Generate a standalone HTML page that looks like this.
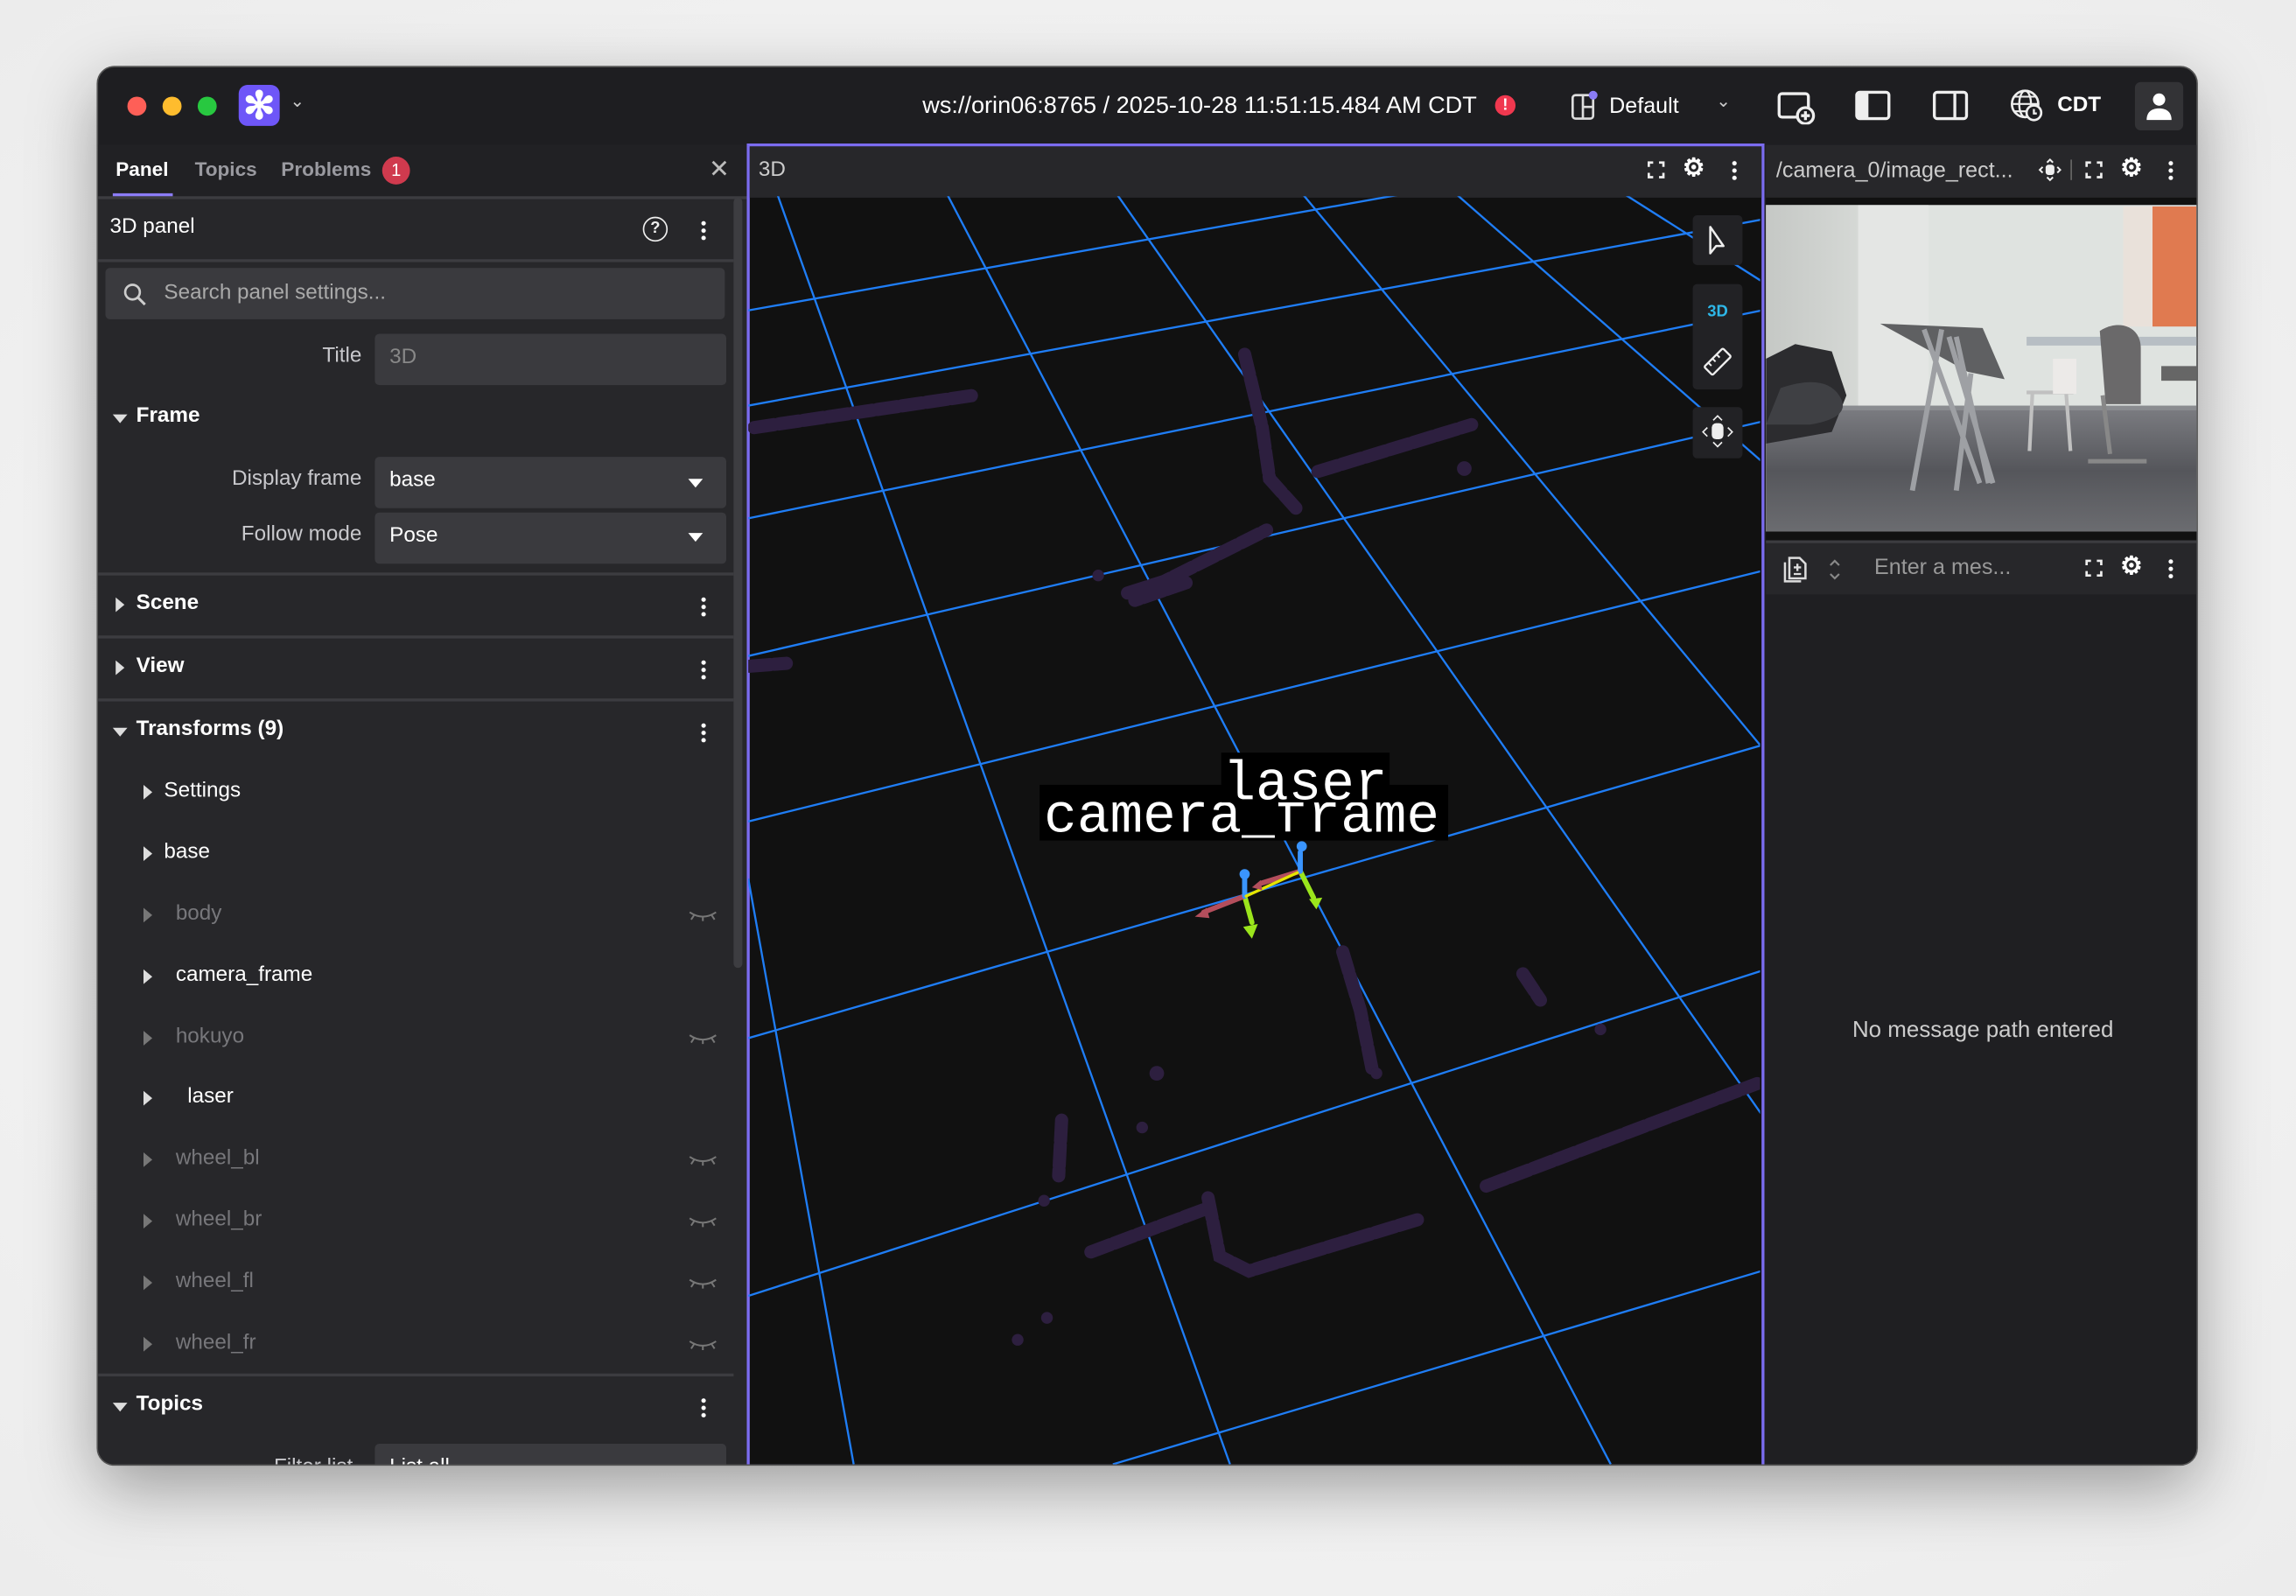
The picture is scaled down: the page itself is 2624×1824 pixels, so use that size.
<!DOCTYPE html>
<html><head><meta charset="utf-8"><style>
*{box-sizing:border-box;margin:0;padding:0}
html,body{width:2624px;height:1824px;overflow:hidden;background:#f3f3f3}
#w{position:absolute;left:0;top:0;width:1568px;height:1090px;transform:scale(1.67347);transform-origin:0 0;font-family:"Liberation Sans",sans-serif;background:radial-gradient(ellipse at 50% 50%,#fafafa,#ececec)}
.a{position:absolute}
.win{left:66px;top:45px;width:1435px;height:956px;border-radius:12px;background:#1e1e21;overflow:hidden;box-shadow:0 15px 45px rgba(0,0,0,.35);border:1px solid #555}
.t{color:#fff;font-size:14.5px;white-space:nowrap}
.g{color:#8a8a8e}
.lbl{color:#c8c8cc;font-size:14.5px;text-align:right;width:150px}
.inp{background:#3a3a3e;border-radius:3px}
.hr{height:2px;background:#3c3c40}
.tri-d{width:0;height:0;border-left:5px solid transparent;border-right:5px solid transparent;border-top:6px solid #ddd}
.tri-r{width:0;height:0;border-top:5px solid transparent;border-bottom:5px solid transparent;border-left:6px solid #ddd}
.keb{width:3px;height:14px;background:radial-gradient(circle,#fff 1.4px,transparent 1.6px) 0 0/3px 5px repeat-y}
</style></head><body><div id="w">
<div class="a win">
 <div class="a" style="left:20px;top:20px;width:13px;height:13px;border-radius:50%;background:#fe5f57"></div>
 <div class="a" style="left:44px;top:20px;width:13px;height:13px;border-radius:50%;background:#febc2e"></div>
 <div class="a" style="left:68px;top:20px;width:13px;height:13px;border-radius:50%;background:#28c840"></div>
 <div class="a" style="left:96px;top:12px;width:28px;height:28px;border-radius:6px;background:#6e56f8;color:#fff;font-size:26px;line-height:28px;text-align:center;font-weight:bold">✻</div>
 <div class="a t" style="left:131px;top:16px;font-size:12px;color:#ccc">⌄</div>
 <div class="a t" style="left:563px;top:17px;font-size:16.2px">ws://orin06:8765 / 2025-10-28 11:51:15.484 AM CDT</div>
 <div class="a" style="left:954px;top:19px;width:14px;height:14px;border-radius:50%;background:#f0384f;color:#fff;font-size:11px;font-weight:bold;text-align:center;line-height:14px">!</div>
 <svg class="a" style="left:1005px;top:15px" width="20" height="22" viewBox="0 0 20 22"><rect x="2" y="4" width="14" height="16" rx="2" fill="none" stroke="#ddd" stroke-width="1.6"/><path d="M9 4v16M9 12h7" stroke="#ddd" stroke-width="1.6"/><circle cx="16" cy="4" r="3" fill="#8b7cf7"/></svg>
 <div class="a t" style="left:1032px;top:18px;font-size:15px">Default</div>
 <div class="a t" style="left:1105px;top:16px;font-size:12px;color:#ccc">⌄</div>
 <svg class="a" style="left:1146px;top:15px" width="28" height="24" viewBox="0 0 28 24"><rect x="2" y="3" width="20" height="16" rx="2" fill="none" stroke="#eee" stroke-width="2"/><circle cx="20" cy="18" r="5.5" fill="#1e1e21" stroke="#eee" stroke-width="2"/><path d="M20 15v6M17 18h6" stroke="#eee" stroke-width="2"/></svg>
 <svg class="a" style="left:1199px;top:15px" width="26" height="22" viewBox="0 0 26 22"><rect x="2" y="2" width="22" height="18" rx="2" fill="none" stroke="#eee" stroke-width="2"/><rect x="2" y="2" width="8" height="18" fill="#eee"/></svg>
 <svg class="a" style="left:1252px;top:15px" width="26" height="22" viewBox="0 0 26 22"><rect x="2" y="2" width="22" height="18" rx="2" fill="none" stroke="#eee" stroke-width="2"/><path d="M16 2v18" stroke="#eee" stroke-width="2"/></svg>
 <svg class="a" style="left:1305px;top:14px" width="24" height="24" viewBox="0 0 24 24"><circle cx="11" cy="11" r="9" fill="none" stroke="#eee" stroke-width="1.6"/><ellipse cx="11" cy="11" rx="4" ry="9" fill="none" stroke="#eee" stroke-width="1.4"/><path d="M2 11h18M4 6h14M4 16h14" stroke="#eee" stroke-width="1.2"/><circle cx="17" cy="17" r="5" fill="#1e1e21" stroke="#eee" stroke-width="1.6"/><path d="M17 14.5v3h2" stroke="#eee" stroke-width="1.4" fill="none"/></svg>
 <div class="a t" style="left:1338px;top:18px;font-weight:bold">CDT</div>
 <div class="a" style="left:1391px;top:10px;width:33px;height:33px;border-radius:4px;background:#333336"></div>
 <svg class="a" style="left:1398px;top:17px" width="19" height="19" viewBox="0 0 19 19"><circle cx="9.5" cy="5" r="4.2" fill="#fff"/><path d="M1 19c0-6 4-8 8.5-8s8.5 2 8.5 8z" fill="#fff"/></svg>

 <div class="a" style="left:0;top:53px;width:443px;height:903px;background:#27272a"></div>
 <div class="a" style="left:0;top:53px;width:443px;height:36px;background:#212124"></div>
 <div class="a t" style="left:12px;top:62px;font-size:13.5px;font-weight:bold">Panel</div>
 <div class="a" style="left:10px;top:86px;width:41px;height:3px;background:#8b7cf7"></div>
 <div class="a t g" style="left:66px;top:62px;font-size:13.5px;font-weight:bold;color:#9a9aa0">Topics</div>
 <div class="a t g" style="left:125px;top:62px;font-size:13.5px;font-weight:bold;color:#9a9aa0">Problems</div>
 <div class="a" style="left:194px;top:61px;width:19px;height:19px;border-radius:50%;background:#d03a4e;color:#fff;font-size:12px;text-align:center;line-height:19px">1</div>
 <div class="a t" style="left:417px;top:60px;font-size:17px;color:#bbb">✕</div>
 <div class="a hr" style="left:0;top:88px;width:443px"></div>
 <div class="a t" style="left:8px;top:101px">3D panel</div>
 <div class="a" style="left:372px;top:102px;width:17px;height:17px;border:1.6px solid #eee;border-radius:50%;color:#eee;font-size:11px;font-weight:bold;text-align:center;line-height:14px">?</div>
 <div class="a keb" style="left:412px;top:104px"></div>
 <div class="a hr" style="left:0;top:131px;width:434px"></div>
 <div class="a inp" style="left:5px;top:137px;width:423px;height:35px"></div>
 <svg class="a" style="left:17px;top:147px" width="16" height="16" viewBox="0 0 16 16"><circle cx="6.5" cy="6.5" r="5" fill="none" stroke="#ccc" stroke-width="1.6"/><path d="M10 10l5 5" stroke="#ccc" stroke-width="1.8"/></svg>
 <div class="a t" style="left:45px;top:146px;color:#aaa">Search panel settings...</div>
 <div class="a lbl" style="left:30px;top:189px">Title</div>
 <div class="a inp" style="left:189px;top:182px;width:240px;height:35px"></div>
 <div class="a t" style="left:199px;top:190px;color:#888">3D</div>
 <div class="a tri-d" style="left:10px;top:237px"></div>
 <div class="a t" style="left:26px;top:230px;font-weight:bold">Frame</div>
 <div class="a lbl" style="left:30px;top:273px">Display frame</div>
 <div class="a inp" style="left:189px;top:266px;width:240px;height:35px"></div>
 <div class="a t" style="left:199px;top:274px">base</div>
 <div class="a tri-d" style="left:403px;top:281px;border-top-color:#fff"></div>
 <div class="a lbl" style="left:30px;top:311px">Follow mode</div>
 <div class="a inp" style="left:189px;top:304px;width:240px;height:35px"></div>
 <div class="a t" style="left:199px;top:312px">Pose</div>
 <div class="a tri-d" style="left:403px;top:318px;border-top-color:#fff"></div>
 <div class="a hr" style="left:0;top:345px;width:434px"></div>
 <div class="a tri-r" style="left:12px;top:362px"></div>
 <div class="a t" style="left:26px;top:358px;font-weight:bold">Scene</div>
 <div class="a keb" style="left:412px;top:361px"></div>
 <div class="a hr" style="left:0;top:388px;width:434px"></div>
 <div class="a tri-r" style="left:12px;top:405px"></div>
 <div class="a t" style="left:26px;top:401px;font-weight:bold">View</div>
 <div class="a keb" style="left:412px;top:404px"></div>
 <div class="a hr" style="left:0;top:431px;width:434px"></div>
 <div class="a tri-d" style="left:10px;top:451px"></div>
 <div class="a t" style="left:26px;top:444px;font-weight:bold">Transforms (9)</div>
 <div class="a keb" style="left:412px;top:447px"></div>
 <div class="a tri-r" style="left:31px;top:490px"></div><div class="a t" style="left:45px;top:486px">Settings</div>
 <div class="a tri-r" style="left:31px;top:532px"></div><div class="a t" style="left:45px;top:528px">base</div>
 <div class="a tri-r" style="left:31px;top:574px;border-left-color:#777"></div><div class="a t" style="left:53px;top:570px;color:#77777b">body</div>
 <div class="a tri-r" style="left:31px;top:616px"></div><div class="a t" style="left:53px;top:612px">camera_frame</div>
 <div class="a tri-r" style="left:31px;top:658px;border-left-color:#777"></div><div class="a t" style="left:53px;top:654px;color:#77777b">hokuyo</div>
 <div class="a tri-r" style="left:31px;top:699px"></div><div class="a t" style="left:61px;top:695px">laser</div>
 <div class="a tri-r" style="left:31px;top:741px;border-left-color:#777"></div><div class="a t" style="left:53px;top:737px;color:#77777b">wheel_bl</div>
 <div class="a tri-r" style="left:31px;top:783px;border-left-color:#777"></div><div class="a t" style="left:53px;top:779px;color:#77777b">wheel_br</div>
 <div class="a tri-r" style="left:31px;top:825px;border-left-color:#777"></div><div class="a t" style="left:53px;top:821px;color:#77777b">wheel_fl</div>
 <div class="a tri-r" style="left:31px;top:867px;border-left-color:#777"></div><div class="a t" style="left:53px;top:863px;color:#77777b">wheel_fr</div>
 <svg class="a" style="left:403px;top:574px" width="20" height="360" viewBox="0 0 20 360">
  <g fill="none" stroke="#777" stroke-width="1.2">
   <path d="M1 3q9 6 18 0M4 5l-2 3M10 6v3M16 5l2 3"/>
   <path transform="translate(0,84)" d="M1 3q9 6 18 0M4 5l-2 3M10 6v3M16 5l2 3"/>
   <path transform="translate(0,167)" d="M1 3q9 6 18 0M4 5l-2 3M10 6v3M16 5l2 3"/>
   <path transform="translate(0,209)" d="M1 3q9 6 18 0M4 5l-2 3M10 6v3M16 5l2 3"/>
   <path transform="translate(0,251)" d="M1 3q9 6 18 0M4 5l-2 3M10 6v3M16 5l2 3"/>
   <path transform="translate(0,293)" d="M1 3q9 6 18 0M4 5l-2 3M10 6v3M16 5l2 3"/>
  </g></svg>
 <div class="a hr" style="left:0;top:892px;width:434px"></div>
 <div class="a tri-d" style="left:10px;top:912px"></div>
 <div class="a t" style="left:26px;top:905px;font-weight:bold">Topics</div>
 <div class="a keb" style="left:412px;top:908px"></div>
 <div class="a inp" style="left:189px;top:940px;width:240px;height:35px"></div>
 <div class="a t" style="left:120px;top:948px;color:#c8c8cc">Filter list</div>
 <div class="a t" style="left:199px;top:948px">List all</div>
 <div class="a" style="left:434px;top:89px;width:6px;height:526px;background:#3d3d41;border-radius:3px"></div>

 <div class="a" style="left:443px;top:52px;width:695px;height:904px;border:2px solid #7b6cf0;background:#111"></div>
 <div class="a" style="left:445px;top:54px;width:691px;height:35px;background:#27272a"></div>
 <div class="a t" style="left:451px;top:62px;color:#ccc">3D</div>
 <svg class="a" style="left:1058px;top:64px" width="12" height="12" viewBox="0 0 12 12"><path d="M1 4V1h3M8 1h3v3M11 8v3H8M4 11H1V8" fill="none" stroke="#eee" stroke-width="1.6"/></svg>
 <div class="a t" style="left:1082px;top:59px;font-size:17px;font-weight:bold">⚙</div>
 <div class="a keb" style="left:1116px;top:63px"></div>

 <div class="a" style="left:1138px;top:53px;width:297px;height:903px;background:#1f1f22"></div>
 <div class="a" style="left:1139px;top:53px;width:296px;height:36px;background:#27272a"></div>
 <div class="a t" style="left:1146px;top:62px;color:#ccc;font-size:15px">/camera_0/image_rect...</div>
 <svg class="a" style="left:1325px;top:62px" width="16" height="16" viewBox="0 0 16 16"><rect x="5" y="4.5" width="6" height="7" rx="2" fill="#eee"/><path d="M6 3l2-2 2 2M6 13l2 2 2-2M3 6l-2 2 2 2M13 6l2 2-2 2" fill="none" stroke="#eee" stroke-width="1.2"/></svg>
 <div class="a" style="left:1347px;top:63px;width:1px;height:14px;background:#666"></div>
 <svg class="a" style="left:1357px;top:64px" width="12" height="12" viewBox="0 0 12 12"><path d="M1 4V1h3M8 1h3v3M11 8v3H8M4 11H1V8" fill="none" stroke="#eee" stroke-width="1.6"/></svg>
 <div class="a t" style="left:1381px;top:59px;font-size:17px;font-weight:bold">⚙</div>
 <div class="a keb" style="left:1414px;top:63px"></div>
 <div class="a" style="left:1139px;top:89px;width:296px;height:5px;background:#111"></div>
 <div class="a" style="left:1139px;top:94px;width:296px;height:223px;overflow:hidden;background:#dfe3e0">
  <div class="a" style="left:0;top:0;width:63px;height:140px;background:linear-gradient(90deg,#c5c8c5,#d5d8d5)"></div>
  <div class="a" style="left:63px;top:0;width:48px;height:140px;background:#e4e6e4"></div>
  <div class="a" style="left:0;top:140px;width:296px;height:83px;background:linear-gradient(#7a7b80,#55565b 50%,#6b6c70)"></div>
  <div class="a" style="left:0;top:137px;width:296px;height:3px;background:#8a8c90"></div>
  <div class="a" style="left:244px;top:1px;width:50px;height:82px;background:linear-gradient(90deg,#e9e1da 0 40%,#e07a50 40% 100%)"></div>
  <div class="a" style="left:178px;top:90px;width:118px;height:6px;background:#b7bec4"></div>
  <svg class="a" style="left:0;top:0" width="296" height="223">
   <path d="M0 105l20-10 25 5 10 30-10 25-45 8z" fill="#2c2c2f"/>
   <path d="M10 125q30-10 40 5t-20 20H0z" fill="#3f4044"/>
   <path d="M78 81l70 3 15 35-25-5z" fill="#5f6062"/>
   <path d="M120 85l-20 110M108 85l38 105M125 90l30 100M130 90l22 100M140 115l-10 80" stroke="#9ea0a4" stroke-width="3.5" fill="none"/>
   <path d="M228 86c12-8 28-4 28 12v38h-24z" fill="#6a696a"/>
   <path d="M230 130l5 40M220 175h40" stroke="#888" stroke-width="3" fill="none"/>
   <path d="M178 128h32M182 128l-2 40M205 128l3 40" stroke="#c0c0c0" stroke-width="2.5" fill="none"/>
   <rect x="196" y="105" width="16" height="24" fill="#eceae8"/>
   <path d="M270 110h26v10h-26z" fill="#666"/>
  </svg>
 </div>
 <div class="a" style="left:1139px;top:317px;width:296px;height:6px;background:#111"></div>
 <div class="a" style="left:1139px;top:323px;width:296px;height:2px;background:#3c3c40"></div>
 <div class="a" style="left:1139px;top:325px;width:296px;height:35px;background:#27272a"></div>
 <svg class="a" style="left:1150px;top:333px" width="18" height="20" viewBox="0 0 18 20"><path d="M5 2h7l4 4v10H5z" fill="none" stroke="#ddd" stroke-width="1.5"/><path d="M2 5v13h11" fill="none" stroke="#ddd" stroke-width="1.5"/><path d="M10.5 6v5M8 8.5h5M8 13h5" stroke="#ddd" stroke-width="1.4"/></svg>
 <svg class="a" style="left:1181px;top:334px" width="10" height="18" viewBox="0 0 10 18"><path d="M2 6l3-3 3 3M2 12l3 3 3-3" fill="none" stroke="#888" stroke-width="1.3"/></svg>
 <div class="a t" style="left:1213px;top:333px;color:#999;font-size:15px">Enter a mes...</div>
 <svg class="a" style="left:1357px;top:336px" width="12" height="12" viewBox="0 0 12 12"><path d="M1 4V1h3M8 1h3v3M11 8v3H8M4 11H1V8" fill="none" stroke="#eee" stroke-width="1.6"/></svg>
 <div class="a t" style="left:1381px;top:331px;font-size:17px;font-weight:bold">⚙</div>
 <div class="a keb" style="left:1414px;top:335px"></div>
 <div class="a t" style="left:1198px;top:649px;color:#ccc;font-size:15.5px">No message path entered</div>
</div>

<svg class="a" style="left:0;top:0" width="1568" height="1090" viewBox="0 0 1568 1090">
 <defs><clipPath id="c"><rect x="511" y="134" width="691" height="866"/></clipPath></defs>
 <g clip-path="url(#c)">
  <g stroke="#1f7df5" stroke-width="1.4" fill="none">
   <path d="M511 212L1203 89M511 277L1203 150M511 354L1203 212M511 448L1203 288M511 561L1203 390M511 709L1203 509M511 885L1203 663M760 1000L1203 868"/>
   <path d="M531 133L840 1000M647 133L1100 1000M763 133L1203 761M890 133L1203 510M995 133L1203 315M1110 133L1203 192M511 600L583 1000"/>
  </g>
  <g stroke="#2d1f3f" stroke-width="9" stroke-linecap="round" fill="none" stroke-dasharray="14 3">
   <path d="M515 292L665 270M850 242l12 50 5 35 18 20M900 322l105-32M770 405l25-8 20-10 30-15 20-10M810 398l-35 12M1040 665l12 18M917 650l12 40 8 40M725 765l-2 38M745 855l80-30M825 818l8 40 20 10 115-35M1015 810l185-70M512 455l25-2"/>
  </g>
  <g fill="#2d1f3f"><circle cx="1000" cy="320" r="5"/><circle cx="750" cy="393" r="4"/><circle cx="790" cy="733" r="5"/><circle cx="780" cy="770" r="4"/><circle cx="695" cy="915" r="4"/><circle cx="715" cy="900" r="4"/><circle cx="1093" cy="703" r="4"/><circle cx="940" cy="733" r="4"/><circle cx="713" cy="820" r="4"/></g>
  <g stroke-width="3.5" fill="none" stroke-linecap="round">
   <path d="M850 612L855 630" stroke="#9be51c"/><path d="M850 612L822 623" stroke="#b44e5c"/><path d="M850 612V600" stroke="#3a95ff"/>
   <path d="M888 595L897 613" stroke="#9be51c"/><path d="M888 595L862 603" stroke="#b44e5c"/><path d="M888 595V582" stroke="#3a95ff"/>
   <path d="M851 612L886 596" stroke="#e5e500" stroke-width="2"/>
  </g>
  <g><path d="M855 641l-6-8 10-2z" fill="#9be51c"/><path d="M899 621l-5-7 9-1z" fill="#9be51c"/><path d="M816 626l8-6 2 7z" fill="#b44e5c"/><path d="M855 606l6-5 1 7z" fill="#b44e5c"/><circle cx="850" cy="597" r="3.5" fill="#3a95ff"/><circle cx="889" cy="578" r="3.5" fill="#3a95ff"/></g>
  <rect x="710" y="536" width="279" height="38" fill="#000"/>
  <text x="713" y="568" font-family="Liberation Mono,monospace" font-size="37.5" fill="#fff">camera_frame</text>
  <rect x="834" y="514" width="115" height="34" fill="#000"/>
  <text x="835" y="546" font-family="Liberation Mono,monospace" font-size="37.5" fill="#fff">laser</text>
  <rect x="1156" y="147" width="34" height="34" rx="3" fill="#222225"/>
  <path d="M1168 155l0 18 4-5 5 0z" fill="none" stroke="#eee" stroke-width="1.5" stroke-linejoin="round"/>
  <rect x="1156" y="194" width="34" height="72" rx="3" fill="#222225"/>
  <text x="1173" y="216" font-family="Liberation Sans,sans-serif" font-size="11" font-weight="bold" fill="#2eb7e8" text-anchor="middle">3D</text>
  <g transform="translate(1173 247) rotate(-45)"><rect x="-9" y="-4" width="18" height="8" rx="1" fill="none" stroke="#eee" stroke-width="1.4"/><path d="M-5-4v3M-1-4v3M3-4v3" stroke="#eee" stroke-width="1.2"/></g>
  <rect x="1156" y="278" width="34" height="35" rx="3" fill="#222225"/>
  <rect x="1169" y="289" width="8" height="11" rx="3" fill="#eee"/>
  <path d="M1170 287l3-3 3 3M1170 302l3 3 3-3M1166 292l-3 3 3 3M1180 292l3 3-3 3" fill="none" stroke="#eee" stroke-width="1"/>
 </g>
</svg>
</div></body></html>
